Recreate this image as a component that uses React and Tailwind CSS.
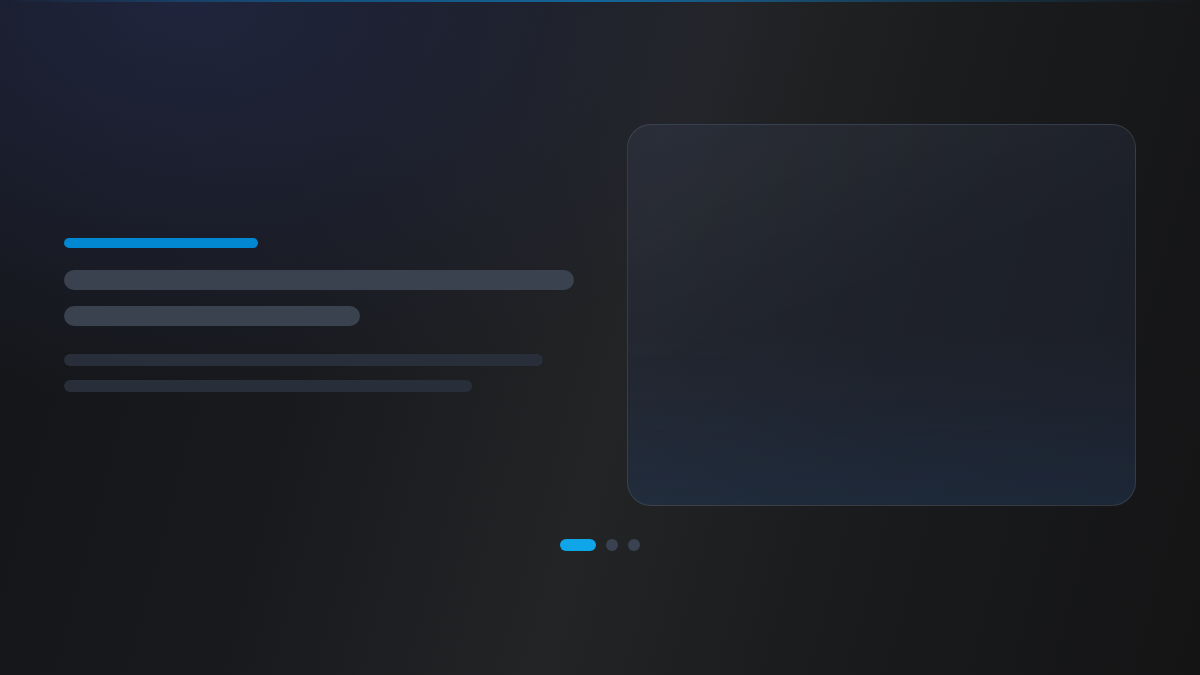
export default function App() {
  return (
    <div className="relative flex h-[675px] w-[1200px] flex-col overflow-hidden bg-[radial-gradient(ellipse_75%_85%_at_15%_0%,rgba(40,50,96,0.5),transparent_70%),linear-gradient(105deg,#141518_0%,#18191c_28%,#232426_52%,#1a1b1d_72%,#141415_100%)] font-['Inter',sans-serif]">
      {/* top accent line */}
      <div className="absolute inset-x-0 top-0 h-[2px] bg-[linear-gradient(90deg,transparent_0%,rgba(14,116,180,0.55)_25%,rgba(14,130,200,0.7)_50%,rgba(14,116,180,0.35)_75%,transparent_100%)]" />

      <div className="flex flex-1 flex-col justify-center px-16">
        <div className="flex items-center gap-[53px]">
          {/* left text skeleton */}
          <div className="flex w-[510px] flex-col">
            <div className="h-[10px] w-[194px] rounded-full bg-[#0288d1]" />
            <div className="mt-[22px] h-5 w-[510px] rounded-full bg-[#3a4250]" />
            <div className="mt-4 h-5 w-[296px] rounded-full bg-[#3a4250]" />
            <div className="mt-7 h-3 w-[479px] rounded-full bg-[#282e3a]" />
            <div className="mt-[14px] h-3 w-[408px] rounded-full bg-[#282e3a]" />
          </div>

          {/* preview card */}
          <div className="h-[382px] w-[509px] rounded-3xl border border-white/10 bg-[linear-gradient(160deg,rgba(255,255,255,0.04)_0%,transparent_45%),linear-gradient(180deg,transparent_55%,rgba(30,70,110,0.22)_100%),linear-gradient(rgba(35,40,56,0.5),rgba(35,40,56,0.5))]" />
        </div>

        {/* pager */}
        <div className="mt-[33px] flex items-center justify-center gap-[10px]">
          <div className="h-3 w-9 rounded-full bg-[#0ea5e9]" />
          <div className="h-3 w-3 rounded-full bg-[#3a4150]" />
          <div className="h-3 w-3 rounded-full bg-[#3a4150]" />
        </div>
      </div>
    </div>
  );
}
